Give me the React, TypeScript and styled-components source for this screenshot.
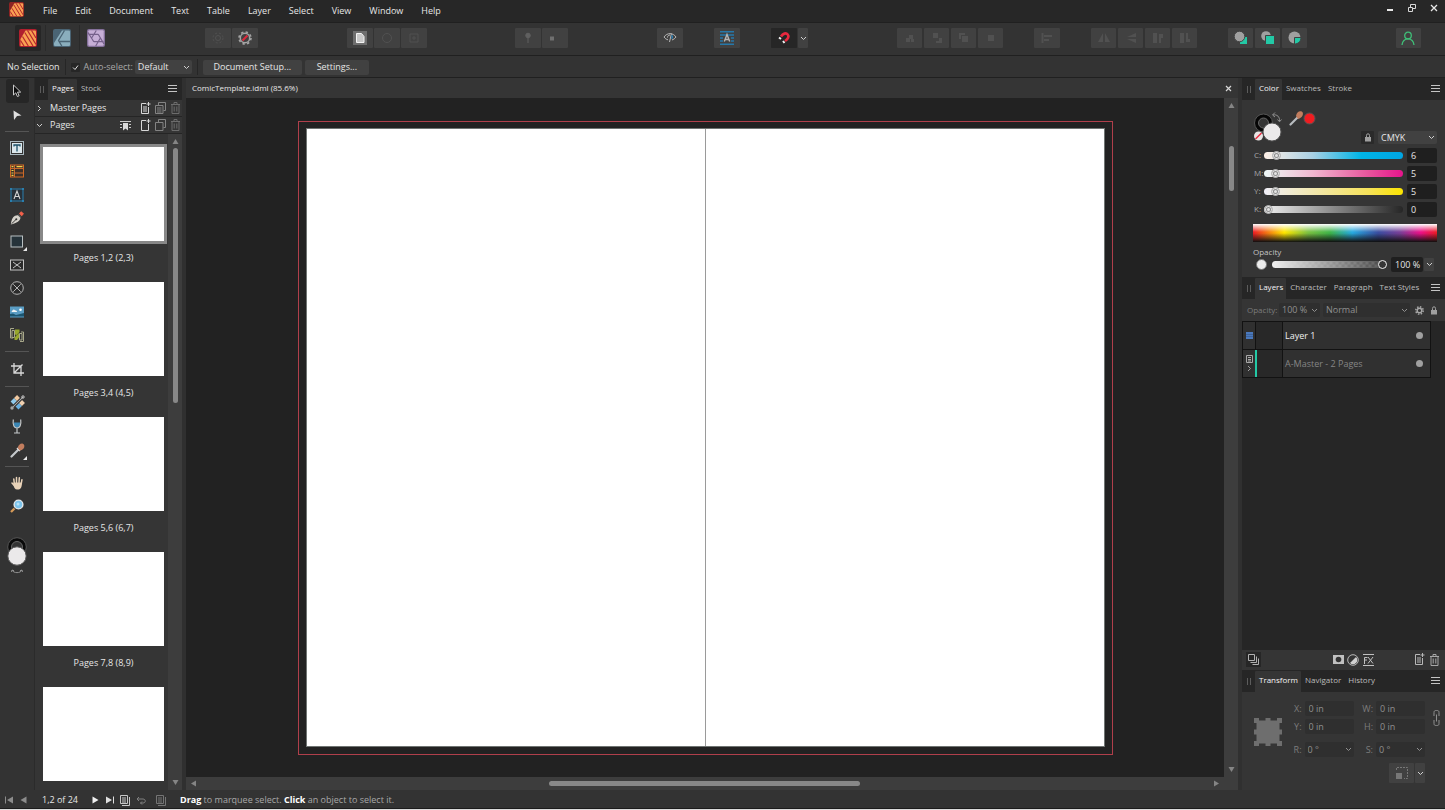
import React, { useState } from "react";
import styled, { createGlobalStyle, css } from "styled-components";

const c = {
  menu: "#272727",
  bar: "#333333",
  panel: "#353535",
  button: "#414141",
  dark: "#262626",
  field: "#1f1f1f",
  canvas: "#222222",
  track: "#3d3d3d",
  thumb: "#888888",
  line: "#202020",
  text: "#e6e6e6",
  dim: "#a8a8a8",
  faint: "#7c7c7c",
  teal: "#23c9a6",
};

const GlobalStyle = createGlobalStyle`
  *, *::before, *::after { box-sizing: border-box; }
  body { margin: 0; background: ${c.bar}; }
  body, button, input, select {
    font-family: "Open Sans", "Noto Sans", sans-serif;
    font-size: 9px;
    line-height: 12px;
    color: ${c.text};
  }
  button, input, select { margin: 0; padding: 0; border: 0; background: none; }
  button { white-space: nowrap; }
  svg { display: block; flex: none; }
`;

/* ---------- shell ---------- */

const Shell = styled.div`
  display: flex;
  flex-direction: column;
  height: 100vh;
  overflow: hidden;
  background: ${c.bar};
  border-bottom: 1px solid #dddddd;
`;

const MenuBar = styled.header`
  display: flex;
  align-items: center;
  height: 22px;
  padding-left: 9px;
  background: ${c.menu};
  & > svg { margin-bottom: 4px; }
`;

const MenuList = styled.nav`
  display: flex;
  flex: 1;
  margin-left: 10px;
  padding-bottom: 1px;
`;

const MenuItem = styled.button`
  padding: 0 9px;
`;

const WindowControls = styled.div`
  display: flex;
  gap: 6px;
  padding: 0 3px 6px 0;
`;

const WindowButton = styled.button`
  display: grid;
  place-items: center;
  width: 16px;
  height: 12px;
`;

const Toolbar = styled.div`
  display: flex;
  align-items: center;
  justify-content: space-between;
  height: 34px;
  padding: 0 24px 2px 15px;
  border-top: 1px solid ${c.line};
  border-bottom: 1px solid ${c.line};
`;

const Personas = styled.div`
  display: flex;
  align-items: center;
  margin-right: 7px;
`;

const Persona = styled.button<{ $active?: boolean }>`
  display: grid;
  place-items: center;
  width: 26px;
  height: 26px;
  border-radius: 2px;
  background: ${(p) => (p.$active ? c.dark : "none")};
`;

const PersonaRule = styled.span`
  width: 1px;
  height: 26px;
  margin: 0 3px 0 4px;
  background: #2a2a2a;
`;

const Cluster = styled.div`
  display: flex;
  gap: 31px;
`;

const Group = styled.div<{ $loose?: boolean }>`
  display: flex;
  gap: ${(p) => (p.$loose ? 2 : 1)}px;
`;

const ToolbarButton = styled.button<{ $active?: boolean; $size?: "arrow" | "small"; $muted?: boolean }>`
  display: grid;
  place-items: center;
  width: ${(p) => (p.$size === "arrow" ? 10 : p.$size === "small" ? 25 : 26)}px;
  height: 20px;
  border-radius: 1px;
  background: ${(p) => (p.$active ? c.dark : c.button)};
  color: ${(p) => (p.$muted ? "#515151" : "#c8c8c8")};
`;

const ContextBar = styled.div`
  display: flex;
  align-items: center;
  height: 22px;
  padding: 1px 0 0 7px;
  border-bottom: 1px solid ${c.line};
`;

const ContextRule = styled.span`
  width: 1px;
  height: 16px;
  margin: 0 5px;
  background: ${c.dark};
`;

const CheckLabel = styled.label`
  display: flex;
  align-items: center;
  gap: 4px;
  margin-right: 2px;
  color: ${c.dim};
`;

const CheckHolder = styled.span`
  display: grid;
  & > * { grid-area: 1 / 1; place-self: center; }
  & > svg { pointer-events: none; }
`;

const CheckInput = styled.input`
  appearance: none;
  width: 9px;
  height: 9px;
  border-radius: 1px;
  background: ${c.dark};
`;

const ContextButton = styled.button<{ $wide?: boolean }>`
  width: ${(p) => (p.$wide ? 99 : 64)}px;
  height: 15px;
  margin-right: 3px;
  border-radius: 2px;
  background: ${c.button};
`;

/* ---------- select and fields ---------- */

const SelectHolder = styled.span<{ $w?: number; $tone?: "plain" | "dark"; $h?: number }>`
  display: grid;
  align-items: center;
  ${(p) => (p.$w ? css`width: ${p.$w}px;` : css`flex: 1;`)}
  height: ${(p) => p.$h || 14}px;
  border-radius: 2px;
  background: ${(p) => (p.$tone === "dark" ? "#2f2f2f" : c.button)};
  & > * { grid-area: 1 / 1; }
  & > svg { justify-self: end; margin-right: 2px; pointer-events: none; }
`;

const SelectBox = styled.select<{ $dim?: boolean }>`
  appearance: none;
  width: 100%;
  height: 100%;
  padding: 0 3px;
  color: ${(p) => (p.$dim ? "#909090" : c.text)};
  option { background: ${c.panel}; }
`;

type DropProps = { label: string; value: string; width?: number; height?: number; dim?: boolean };

function Dropdown({ label, value, width, height, dim }: DropProps) {
  return (
    <SelectHolder $w={width} $h={height} $tone={dim ? "dark" : "plain"}>
      <SelectBox aria-label={label} defaultValue={value} $dim={dim}>
        <option>{value}</option>
      </SelectBox>
      <Chevron color={dim ? "#909090" : "#d0d0d0"} />
    </SelectHolder>
  );
}

/* ---------- workspace ---------- */

const Workspace = styled.main`
  display: grid;
  grid-template-columns: 35px 147px minmax(0, 1fr) 203px;
  flex: 1;
  min-height: 0;
`;

const ToolStrip = styled.nav`
  display: flex;
  flex-direction: column;
  align-items: center;
  padding-top: 1px;
  border-right: 1px solid #2b2b2b;
`;

const ToolGroup = styled.div<{ $h: number }>`
  display: flex;
  flex-direction: column;
  width: 23px;
  height: ${(p) => p.$h}px;
`;

const ToolButton = styled.button<{ $active?: boolean }>`
  display: grid;
  place-items: center;
  flex: 1;
  border-radius: 3px;
  background: ${(p) => (p.$active ? c.dark : "none")};
  & > * { grid-area: 1 / 1; }
`;

const FlyoutMark = styled.svg`
  place-self: end;
  margin: 0 2px 2px 0;
`;

const ToolRule = styled.span`
  width: 24px;
  height: 1px;
  margin: 4px 0;
  background: #555555;
`;

const FillStroke = styled.button`
  margin-top: 19px;
`;

/* ---------- panels ---------- */

const Tabs = styled.div`
  display: flex;
  align-items: stretch;
  height: 22px;
  padding: 1px 5px 0 0;
  background: ${c.dark};
`;

const Grip = styled.span`
  display: flex;
  align-items: center;
  gap: 2px;
  width: 13px;
  padding-left: 5px;
  &::before, &::after {
    content: "";
    width: 1px;
    height: 7px;
    background: #5c5c5c;
  }
`;

const Tab = styled.button<{ $active?: boolean }>`
  padding: 0 3px 3px 4px;
  font-size: 8px;
  border-radius: 1px 1px 0 0;
  background: ${(p) => (p.$active ? c.panel : "none")};
  color: ${(p) => (p.$active ? "#f4f4f4" : "#bcbcbc")};
`;

const TabMenu = styled.button`
  margin-left: auto;
  padding-bottom: 2px;
`;

function PanelTabs({ names }: { names: string[] }) {
  const [current, setCurrent] = useState(names[0]);
  return (
    <Tabs role="tablist">
      <Grip />
      {names.map((n) => (
        <Tab key={n} role="tab" aria-selected={n === current} $active={n === current} onClick={() => setCurrent(n)}>
          {n}
        </Tab>
      ))}
      <TabMenu aria-label="Panel menu">
        <svg width="9" height="9" viewBox="0 0 9 9" stroke="#c4c4c4">
          <path d="M0 1.5h9M0 4.5h9M0 7.5h9" />
        </svg>
      </TabMenu>
    </Tabs>
  );
}

const PagesPanel = styled.section`
  display: flex;
  flex-direction: column;
  min-height: 0;
  background: ${c.panel};
`;

const SectionRow = styled.div`
  display: flex;
  align-items: center;
  height: 17px;
  padding: 0 1px;
  border-bottom: 1px solid #252525;
  &:last-of-type { border-bottom-color: ${c.panel}; }
`;

const SectionTitle = styled.button`
  display: flex;
  align-items: center;
  gap: 7px;
  flex: 1;
  text-align: left;
`;

const IconRow = styled.div`
  display: flex;
  align-items: center;
  gap: 3px;
`;

const IconButton = styled.button<{ $gap?: boolean }>`
  display: grid;
  place-items: center;
  width: 12px;
  height: 14px;
  margin-right: ${(p) => (p.$gap ? 5 : 0)}px;
`;

const PagesScroller = styled.div`
  display: flex;
  flex: 1;
  min-height: 0;
`;

const PageList = styled.ol`
  flex: 1;
  margin: 0;
  padding: 10px 0 0;
  overflow: hidden;
  list-style: none;
`;

const PageEntry = styled.li`
  height: 135px;
`;

const PageButton = styled.button<{ $active?: boolean }>`
  display: block;
  width: 100%;
  padding: 0 1px 0 5px;
`;

const PageThumb = styled.span<{ $active?: boolean }>`
  display: block;
  height: 100px;
  border: 3px solid ${(p) => (p.$active ? "#888888" : "transparent")};
  background: #ffffff padding-box;
`;

const PageLabel = styled.span`
  display: block;
  margin-top: 8px;
`;

const VScroll = styled.div`
  display: flex;
  flex-direction: column;
  align-items: center;
  width: 14px;
  padding: 4px 0;
  background: ${c.track};
`;

const VTrack = styled.div<{ $before: number; $size: number; $after: number }>`
  display: grid;
  flex: 1;
  width: 5px;
  grid-template-rows: ${(p) => `${p.$before}fr ${p.$size}fr ${p.$after}fr`};
  &::before {
    content: "";
    grid-row: 2;
    border-radius: 3px;
    background: ${c.thumb};
  }
`;

const HScroll = styled.div`
  display: flex;
  align-items: center;
  height: 13px;
  padding: 0 4px;
  background: ${c.track};
`;

const HTrack = styled.div`
  display: grid;
  flex: 1;
  height: 5px;
  grid-template-columns: 350fr 309fr 351fr;
  &::before {
    content: "";
    grid-column: 2;
    border-radius: 3px;
    background: ${c.thumb};
  }
`;

const DocArea = styled.section`
  display: flex;
  flex-direction: column;
  min-width: 0;
  padding: 0 4px;
  background: #303030;
`;

const DocTab = styled.div`
  display: flex;
  align-items: center;
  justify-content: space-between;
  height: 20px;
  padding: 0 6px;
  font-size: 8px;
  background: ${c.panel};
`;

const DocBody = styled.div`
  display: grid;
  flex: 1;
  min-height: 0;
  grid-template-columns: minmax(0, 1fr) 14px;
  grid-template-rows: minmax(0, 1fr) 13px;
  background: ${c.track};
`;

const Canvas = styled.div`
  display: flex;
  padding: 23px 111px 22px 112px;
  background: ${c.canvas};
`;

const Bleed = styled.div`
  display: flex;
  flex: 1;
  padding: 6px 7px 7px;
  border: 1px solid #b03f4b;
`;

const Spread = styled.div`
  display: flex;
  flex: 1;
  border: 1px solid #6f7472;
  background: #ffffff;
  &::before {
    content: "";
    width: 50%;
    border-right: 1px solid #9a9a9a;
  }
`;

const RightDock = styled.aside`
  display: flex;
  flex-direction: column;
  min-height: 0;
  background: ${c.panel};
`;

/* ---------- colour panel ---------- */

const ColorBody = styled.div`
  height: 177px;
  padding: 9px 8px 0 11px;
`;

const ColorTop = styled.div`
  display: flex;
  justify-content: space-between;
  height: 37px;
`;

const ColorMode = styled.div`
  display: flex;
  align-items: flex-end;
  gap: 4px;
  padding-bottom: 2px;
`;

const LockButton = styled.button`
  display: grid;
  place-items: center;
  width: 13px;
  height: 13px;
  border-radius: 1px;
  background: #2a2a2a;
`;

const Channel = styled.div`
  display: flex;
  align-items: center;
  height: 18px;
`;

const ChannelLabel = styled.label`
  width: 11px;
  padding-left: 1px;
  font-size: 8px;
  color: ${c.dim};
`;

const Slider = styled.input<{ $fill: string }>`
  appearance: none;
  flex: 1;
  min-width: 0;
  height: 11px;
  &::-webkit-slider-runnable-track {
    height: 7px;
    border-radius: 4px;
    background: ${(p) => p.$fill};
  }
  &::-webkit-slider-thumb {
    appearance: none;
    width: 9px;
    height: 9px;
    margin-top: -1px;
    border: 1px solid #b0b0b0;
    border-radius: 50%;
    background: #e4e4e4;
    box-shadow: inset 0 0 0 1px #e4e4e4, inset 0 0 0 2px #8c8c8c;
  }
`;

const NumberField = styled.input<{ $w: number }>`
  width: ${(p) => p.$w}px;
  height: 15px;
  padding: 0 0 0 4px;
  margin-left: 4px;
  border-radius: 2px;
  background: ${c.field};
`;

const Spectrum = styled.button`
  display: block;
  width: 100%;
  height: 18px;
  margin-top: 6px;
  background:
    linear-gradient(to bottom, #ffffff 0%, rgba(255, 255, 255, 0) 45%, rgba(0, 0, 0, 0) 50%, #101010 100%),
    linear-gradient(to right, #ed1c24 0%, #ffe600 17%, #7cc242 30%, #3fb54a 42%, #27aae1 54%, #3a4ea1 68%, #7a3f98 80%, #ec1089 91%, #ed1c24 100%);
`;

const SmallLabel = styled.label`
  display: block;
  margin-top: 4px;
  font-size: 8px;
  color: #c4c4c4;
`;

const OpacityRow = styled.div`
  display: flex;
  align-items: center;
  height: 13px;
  padding-left: 3px;
`;

const FillDot = styled.span`
  width: 11px;
  height: 11px;
  margin-right: 5px;
  border: 1px solid #777777;
  border-radius: 50%;
  background: #ececec;
`;

const OpacitySlider = styled.input`
  appearance: none;
  flex: 1;
  min-width: 0;
  height: 11px;
  &::-webkit-slider-runnable-track {
    height: 7px;
    border-radius: 4px;
    background: linear-gradient(to right, #f0f0f0, rgba(64, 64, 64, 0.6)),
      repeating-conic-gradient(#7a7a7a 0 25%, #464646 0 50%) center / 6px 6px;
  }
  &::-webkit-slider-thumb {
    appearance: none;
    width: 9px;
    height: 9px;
    margin-top: -1px;
    border: 1px solid #f0f0f0;
    border-radius: 50%;
    background: #353535;
  }
`;

const DropButton = styled.button`
  display: grid;
  place-items: center;
  width: 10px;
  height: 13px;
  margin: 0 3px 0 1px;
  border-radius: 1px;
  background: ${c.button};
`;

/* ---------- layers panel ---------- */

const LayersBody = styled.div`
  display: flex;
  flex-direction: column;
  flex: 1;
  min-height: 0;
`;

const LayerOptions = styled.div`
  display: flex;
  align-items: center;
  gap: 3px;
  height: 22px;
  padding: 0 5px;
  color: ${c.faint};
  & > span:first-child { width: 29px; font-size: 8px; }
`;

const LayerList = styled.ul`
  flex: 1;
  margin: 0;
  padding: 0 14px 0 0;
  background: ${c.dark};
  list-style: none;
`;

const LayerRow = styled.li<{ $dim?: boolean }>`
  display: flex;
  align-items: stretch;
  height: 28px;
  border: 1px solid #121212;
  border-bottom-width: 0;
  background: #303030;
  color: ${(p) => (p.$dim ? "#858585" : "#f0f0f0")};
  &:last-child { height: 29px; border-bottom-width: 1px; }
`;

const LayerKind = styled.span`
  display: flex;
  flex-direction: column;
  align-items: center;
  justify-content: center;
  gap: 2px;
  width: 12px;
`;

const LayerThumb = styled.span<{ $accent?: boolean }>`
  width: 28px;
  border: solid #121212;
  border-width: 0 1px;
  border-left: ${(p) => (p.$accent ? `2px solid ${c.teal}` : "1px solid #121212")};
  background: #282828;
`;

const LayerName = styled.span`
  flex: 1;
  align-self: center;
  padding-left: 2px;
`;

const LayerDot = styled.button`
  align-self: center;
  width: 7px;
  height: 7px;
  margin-right: 7px;
  border-radius: 50%;
  background: #a0a0a0;
`;

const LayerFooter = styled.div`
  display: flex;
  align-items: center;
  gap: 3px;
  height: 20px;
  padding: 0 5px 1px 4px;
`;

const FooterSpace = styled.span<{ $grow: number }>`
  flex: ${(p) => p.$grow};
`;

const DarkIconButton = styled.button`
  display: grid;
  place-items: center;
  width: 15px;
  height: 15px;
  background: ${c.dark};
`;

/* ---------- transform panel ---------- */

const TransformBody = styled.div`
  display: grid;
  grid-template-columns: 28px 1fr 1fr 8px;
  column-gap: 8px;
  align-items: start;
  height: 98px;
  padding: 0 4px 0 12px;
`;

const AnchorPicker = styled.svg`
  margin-top: 26px;
`;

const LinkButton = styled.button`
  margin-top: 18px;
`;

const TransformColumn = styled.div`
  display: flex;
  flex-direction: column;
  gap: 3px;
  padding-top: 9px;
`;

const TransformRow = styled.div<{ $above?: number }>`
  display: flex;
  align-items: center;
  justify-content: flex-end;
  margin-top: ${(p) => p.$above || 0}px;
  color: ${c.faint};
`;

const TransformLabel = styled.label`
  flex: 1;
  padding-right: 3px;
  text-align: right;
`;

const TransformField = styled.input`
  width: 49px;
  height: 15px;
  padding: 0 4px;
  border-radius: 2px;
  background: #2f2f2f;
  color: #909090;
`;

/* ---------- status bar ---------- */

const StatusBar = styled.footer`
  display: flex;
  align-items: center;
  height: 19px;
  padding: 2px 0 0 4px;
  border-bottom: 1px solid #1c1c1c;
  color: ${c.dim};
  strong { color: #ffffff; }
`;

const StatusButton = styled.button<{ $w: number }>`
  display: grid;
  place-items: center;
  width: ${(p) => p.$w}px;
  height: 16px;
`;

const StatusHint = styled.span`
  margin-left: 8px;
`;

/* ---------- icons ---------- */

function Chevron({ color = "#d0d0d0", side }: { color?: string; side?: boolean }) {
  return (
    <svg width="7" height="7" viewBox="0 0 7 7" fill="none" stroke={color}>
      <path d={side ? "M2 1l2.5 2.5L2 6" : "M1 2l2.5 2.5L6 2"} />
    </svg>
  );
}

function Arrow({ d }: { d: string }) {
  return (
    <svg width="7" height="7" viewBox="0 0 7 7" fill="#858585">
      <path d={d} />
    </svg>
  );
}

function PublisherIcon({ size = 18, tile = true }: { size?: number; tile?: boolean }) {
  return (
    <svg width={size} height={size} viewBox="0 0 18 18">
      <rect width="18" height="18" rx="2" fill={tile ? "#b01f2e" : "#8e2424"} />
      <path d="M6.5 1.5H16a1 1 0 0 1 1 1V16a1 1 0 0 1-1 1H1.5v-7z" fill="#f9a052" />
      <path d="M8.5 1.500L17 15.500M12.500 1.500L17 9M5.800 3.500L14 17M3.500 7.500L9.300 17M1.500 11.500L5 17" stroke="#b4272d" strokeWidth="1.200" />
    </svg>
  );
}

function DesignerIcon() {
  return (
    <svg width="18" height="18" viewBox="0 0 18 18">
      <rect width="18" height="18" rx="2" fill="#4a6474" />
      <path d="M9 1.500h7a1 1 0 0 1 1 1V16a1 1 0 0 1-1 1H2a1 1 0 0 1-1-1v-2z" fill="#8aaebd" />
      <path d="M11.500 1.500L5.500 11.500l3.300 5.500M17 12.500H6" stroke="#4a6474" strokeWidth="1.300" fill="none" />
    </svg>
  );
}

function PhotoIcon() {
  return (
    <svg width="18" height="18" viewBox="0 0 18 18">
      <rect width="18" height="18" rx="2" fill="#84709a" />
      <rect x="1.3" y="1.3" width="15.4" height="15.4" rx="1" fill="#c6aed6" />
      <path d="M1.500 5.300h9.700M11.200 5.300L17 15M13.400 9L8.700 17M16.500 12.700H6.800M6.800 12.700L1 3.500M4.600 9L9.300 1.500" stroke="#75608a" strokeWidth="1.200" fill="none" />
    </svg>
  );
}

function AddPageIcon({ lined, color = "#d8d8d8" }: { lined?: boolean; color?: string }) {
  return (
    <svg width="11" height="13" viewBox="0 0 11 13" fill="none" stroke={color}>
      <path d="M6 1.5H1.5v10h7V5" />
      <path d="M8.5 0v4M6.5 2h4" />
      {lined && <path d="M3 5h4M3 7h4M3 9h4" />}
    </svg>
  );
}

function CopyIcon({ lined }: { lined?: boolean }) {
  return (
    <svg width="11" height="12" viewBox="0 0 11 12" fill="none" stroke="#848484">
      <path d="M3.5 3V.5h7v8h-2" />
      <path d="M.5 3.500h7.500v8H.5z" />
      {lined && <path d="M2 6h4.500M2 8h4.500M2 10h4.500" />}
    </svg>
  );
}

function TrashIcon({ color = "#6c6c6c" }: { color?: string }) {
  return (
    <svg width="11" height="12" viewBox="0 0 11 12" fill="none" stroke={color}>
      <path d="M1 2.5h9M4 2.5v-2h3v2M2 2.5v9h7v-9M4.2 4.5v5M6.8 4.5v5" />
    </svg>
  );
}

function LockGlyph({ color }: { color: string }) {
  return (
    <svg width="8" height="9" viewBox="0 0 8 9" fill="none" stroke={color}>
      <path d="M2.500 4V2.300a1.500 1.500 0 0 1 3 0V4" />
      <path d="M1 4h6v4.500H1z" fill={color} stroke="none" />
    </svg>
  );
}

function Dropper() {
  return (
    <svg width="15" height="15" viewBox="0 0 15 15">
      <path d="M1.500 13.500L8 7" stroke="#c4c9cc" strokeWidth="2.200" strokeLinecap="round" />
      <path d="M7 5l3 3" stroke="#dddddd" strokeWidth="1.500" />
      <path d="M7.800 5c.4-3.200 3-4.800 5-4.300 1.900.5 2 3.300.8 4.800-1 1.300-2.500 1.900-3.800 2z" fill="#c27d5e" />
    </svg>
  );
}

const tools: Record<string, React.ReactNode> = {
  Move: (
    <svg width="12" height="14" viewBox="0 0 12 14">
      <path d="M2.500 1v10l2.300-2.200 1.600 3.700 1.700-.7-1.600-3.700h3.200z" fill="#0c0c0c" stroke="#c8c8c8" />
    </svg>
  ),
  Node: (
    <svg width="10" height="10" viewBox="0 0 10 10"><path d="M1.500 .5l8 5-4.500.5-3 4z" fill="#e0e0e0" /></svg>
  ),
  "Frame Text": (
    <svg width="14" height="14" viewBox="0 0 14 14" fill="none">
      <rect x=".5" y=".5" width="13" height="13" stroke="#a9b7be" />
      <rect x="2" y="2" width="10" height="10" fill="#dbe7ec" />
      <path d="M4 5.500V4h6v1.500M7 4v6.500" stroke="#1d5068" strokeWidth="1.300" />
    </svg>
  ),
  Table: (
    <svg width="14" height="14" viewBox="0 0 14 14" fill="none">
      <rect x=".5" y="1" width="13" height="12" fill="#3c302a" stroke="#d06a24" />
      <path d="M4.500 1v12M0 4.500h14M5 9h9" stroke="#c9682a" />
      <path d="M6.500 2.700h6M1.500 2.700h2M1.500 6.500h2M1.500 9h2M1.500 11.300h2" stroke="#f2d14a" strokeWidth="1.200" />
    </svg>
  ),
  "Artistic Text": (
    <svg width="14" height="14" viewBox="0 0 14 14" fill="none">
      <rect x="1" y="1" width="12" height="12" fill="#273038" stroke="#2a7fae" />
      <path d="M4 11l3-8 3 8M5 8.500h4" stroke="#d4d4d4" strokeWidth="1.100" />
      <path d="M0 0h2v2H0zM12 0h2v2h-2zM0 12h2v2H0zM12 12h2v2h-2z" fill="#2a7fae" />
    </svg>
  ),
  Pen: (
    <svg width="14" height="14" viewBox="0 0 14 14">
      <path d="M.8 13.500C1.300 9.500 2.500 6 5 4.800L8.500 4l2 2.200c0 3.500-3.800 6-9.700 7.300z" fill="#d6d3cc" />
      <path d="M1.500 12.800L6 8.500" stroke="#3a3a3a" />
      <circle cx="6.300" cy="8.200" r="1" fill="#333333" />
      <path d="M8 3.500l3 3" stroke="#555555" strokeWidth="1.200" />
      <path d="M9 2.500l2.200-2.200 2.800 2.500-2.300 2.400z" fill="#f0604a" />
    </svg>
  ),
  Rectangle: (
    <svg width="14" height="13" viewBox="0 0 14 13"><rect x="1" y="1" width="11.500" height="11" fill="#26333a" stroke="#b8c0c2" /></svg>
  ),
  "Picture Frame Rectangle": (
    <svg width="14" height="12" viewBox="0 0 14 12" fill="none" stroke="#c4c4c4">
      <rect x=".5" y="1" width="13" height="10" fill="#2b2b2b" />
      <path d="M3 3l8 6M11 3L3 9" />
    </svg>
  ),
  "Picture Frame Ellipse": (
    <svg width="14" height="14" viewBox="0 0 14 14" fill="none" stroke="#b4b4b4">
      <circle cx="7" cy="7" r="6.300" fill="#2b2b2b" />
      <path d="M3.300 3.300l7.400 7.400M10.700 3.300l-7.400 7.400" />
    </svg>
  ),
  "Place Image": (
    <svg width="14" height="12" viewBox="0 0 14 12">
      <rect y=".5" width="14" height="11" fill="#5a9dc4" />
      <path d="M0 8l3-.5 3 1.500 8-2v3.500H0z" fill="#1b5570" />
      <path d="M1.500 6c1-2.500 2.500-3.500 3.500-1.700 1.200 0 2 .7 2 1.700z" fill="#f0f4f6" />
      <circle cx="10.500" cy="3.700" r="1.300" fill="#ffffff" />
    </svg>
  ),
  "Data Merge": (
    <svg width="14" height="14" viewBox="0 0 14 14" fill="none">
      <path d="M4 .5H.5V10H3M2 2.500h2.500v7H2zM13.500 4H11M10 13.500h3.500V4M9.500 5.500H12V12H9.500z" stroke="#a8a88a" />
      <path d="M5 1.500h4.500V4L6 7.500 5 6zM4.500 12V9.500L9 5v4.500L7 12z" fill="#98a72c" />
    </svg>
  ),
  "Vector Crop": (
    <svg width="13" height="13" viewBox="0 0 13 13" fill="none" stroke="#d8d8d8" strokeWidth="1.300">
      <path d="M3 0v10h10M0 3h10v10M11.500 1.500L3.500 9.500" />
    </svg>
  ),
  Fill: (
    <svg width="15" height="15" viewBox="0 0 15 15" fill="none">
      <path d="M2 8l3.500-3.500" stroke="#8fc8ea" strokeWidth="4" />
      <path d="M5.500 4.500L8.500 1.500" stroke="#f0c8a0" strokeWidth="4" />
      <path d="M7 13l3.500-3.500" stroke="#6ab0e0" strokeWidth="4" />
      <path d="M10.500 9.500l3-3" stroke="#f0d0b0" strokeWidth="4" />
      <path d="M2 13L13 2" stroke="#4a4a4a" strokeWidth="2.400" />
      <path d="M2 13L13 2" stroke="#a8a8a8" />
      <circle cx="2" cy="13" r="1.700" fill="#a4a4a4" />
      <circle cx="13" cy="2" r="1.200" stroke="#cccccc" />
    </svg>
  ),
  Transparency: (
    <svg width="10" height="15" viewBox="0 0 10 15" fill="none">
      <path d="M2 3.500h6v2.500c0 2-1.500 3-3 3s-3-1-3-3z" fill="#3a86b4" />
      <path d="M1.300.5c-.8 6 1 8.500 3.700 8.500S9.500 6.500 8.700.5M5 9v4.500M2 14h6" stroke="#c4c8ca" strokeWidth="1.200" />
    </svg>
  ),
  "Colour Picker": <Dropper />,
  View: (
    <svg width="13" height="14" viewBox="0 0 13 14" fill="none">
      <path d="M3.300 7.500L2.800 3M5.500 6.500V1.500M8 6.500L8.300 1.800M10.300 7.500l.6-3.700M3.200 9.500L1 7" stroke="#e8d2b8" strokeWidth="1.500" strokeLinecap="round" />
      <path d="M2.600 6.500h8.300c.3 3-.9 7-3.200 7H6c-2 0-3-2-3.400-4z" fill="#e8d2b8" />
    </svg>
  ),
  Zoom: (
    <svg width="14" height="14" viewBox="0 0 14 14" fill="none">
      <path d="M1 13l3.500-3.500" stroke="#d69a58" strokeWidth="2.300" />
      <circle cx="8.500" cy="5.500" r="4.400" fill="#7cc4ec" stroke="#e4e8ea" strokeWidth="1.400" />
      <circle cx="8" cy="5" r="1.500" fill="#b8e2f6" />
    </svg>
  ),
};

const toolGroups: { height: number; names: string[] }[] = [
  { height: 48, names: ["Move", "Node"] },
  {
    height: 211,
    names: ["Frame Text", "Table", "Artistic Text", "Pen", "Rectangle", "Picture Frame Rectangle", "Picture Frame Ellipse", "Place Image", "Data Merge"],
  },
  { height: 26, names: ["Vector Crop"] },
  { height: 71, names: ["Fill", "Transparency", "Colour Picker"] },
  { height: 47, names: ["View", "Zoom"] },
];

const flyouts = ["Rectangle", "Colour Picker"];

/* ---------- sections ---------- */

function Menu() {
  const items = ["File", "Edit", "Document", "Text", "Table", "Layer", "Select", "View", "Window", "Help"];
  return (
    <MenuBar>
      <PublisherIcon size={15} tile={false} />
      <MenuList>
        {items.map((i) => (
          <MenuItem key={i}>{i}</MenuItem>
        ))}
      </MenuList>
      <WindowControls>
        <WindowButton aria-label="Minimise">
          <svg width="8" height="8" viewBox="0 0 8 8"><path d="M1 5h6v2H1z" fill="#e8e8e8" /></svg>
        </WindowButton>
        <WindowButton aria-label="Restore">
          <svg width="8" height="8" viewBox="0 0 8 8" fill="none" stroke="#d8d8d8"><path d="M.5 3.500h4v4h-4zM2.500 3V.5h5v4H5" /></svg>
        </WindowButton>
        <WindowButton aria-label="Close">
          <svg width="8" height="8" viewBox="0 0 8 8" stroke="#e8e8e8" strokeWidth="1.300"><path d="M1 1l6 6M7 1L1 7" /></svg>
        </WindowButton>
      </WindowControls>
    </MenuBar>
  );
}

function Icon({ children }: { children: React.ReactNode }) {
  return (
    <svg width="14" height="14" viewBox="0 0 14 14" fill="none" stroke="currentColor">
      {children}
    </svg>
  );
}

const orderIcons = [
  { label: "Move to back", d: "M3 7h4v4H3zM6 4h4v4H6zM8 8h3v3H8z" },
  { label: "Back one", d: "M3 2h5v5H3zM9 7h3v5H6v-2h3z" },
  { label: "Forward one", d: "M2 2h6v2H4v4H2zM5 5h6v6H5z" },
  { label: "Move to front", d: "M4 4h6v6H4z" },
];

const flipIcons = [
  { label: "Flip horizontal", d: "M6 2v9H1zM8 2v9h5z" },
  { label: "Flip vertical", d: "M12 2v4L3 6zM12 12V8L3 8z" },
  { label: "Rotate left", d: "M2 2h4v10H2zM8 3h4v4h-2v5H8z" },
  { label: "Rotate right", d: "M2 2h4v10H2zM8 2h2v6h2v3H8z" },
];

function MutedGroup({ icons }: { icons: { label: string; d: string }[] }) {
  return (
    <Group $loose>
      {icons.map((i) => (
        <ToolbarButton key={i.label} aria-label={i.label} $muted $size="small">
          <Icon><path d={i.d} fill="currentColor" stroke="none" /></Icon>
        </ToolbarButton>
      ))}
    </Group>
  );
}

function TopToolbar() {
  return (
    <Toolbar>
      <Personas>
        <Persona aria-label="Publisher" $active><PublisherIcon /></Persona>
        <PersonaRule />
        <Persona aria-label="Designer"><DesignerIcon /></Persona>
        <PersonaRule />
        <Persona aria-label="Photo"><PhotoIcon /></Persona>
      </Personas>
      <Group>
        <ToolbarButton aria-label="Preflight" $muted>
          <Icon><circle cx="7" cy="7" r="2.500" /><circle cx="7" cy="7" r="5" strokeDasharray="2 2" /></Icon>
        </ToolbarButton>
        <ToolbarButton aria-label="Live preflight">
          <Icon>
            <circle cx="7" cy="7" r="4.700" stroke="#a4a4a4" strokeWidth="1.500" />
            <circle cx="7" cy="7" r="6" stroke="#a4a4a4" strokeWidth="1.600" strokeDasharray="2.400 2.300" />
            <path d="M4.500 9.500l5-5" stroke="#e0283c" strokeWidth="2" />
          </Icon>
        </ToolbarButton>
      </Group>
      <Group>
        <ToolbarButton aria-label="Page">
          <Icon>
            <path d="M0 0h14v14H0z" fill="#6e6e6e" stroke="none" />
            <path d="M3.500 2.500h5l2.500 3v6H3.500z" fill="#c8c8c8" stroke="#f4f4f4" />
          </Icon>
        </ToolbarButton>
        <ToolbarButton aria-label="Ellipse" $muted><Icon><circle cx="7" cy="7" r="4.500" /></Icon></ToolbarButton>
        <ToolbarButton aria-label="Origin" $muted><Icon><path d="M3 3h8v8H3zM6 6h2v2H6z" /></Icon></ToolbarButton>
      </Group>
      <Group>
        <ToolbarButton aria-label="Pin" $muted>
          <Icon><circle cx="7" cy="4.500" r="2.300" fill="#606060" stroke="#606060" /><path d="M7 6v6" stroke="#606060" /></Icon>
        </ToolbarButton>
        <ToolbarButton aria-label="Inline pin" $muted>
          <Icon><path d="M2 5.500h4v4H2z" fill="#707070" stroke="none" /></Icon>
        </ToolbarButton>
      </Group>
      <Cluster>
        <ToolbarButton aria-label="Preview">
          <Icon>
            <path d="M1 6c3-4.500 9-4.500 12 0-1 1.500-2.500 2.500-4 3M1 6c1 1.500 2.500 2.500 4 2.800" stroke="#b8b8b8" />
            <path d="M4.500 6.500c0-1.500 1-2.500 2.500-2.500M8.500 2.500L6.500 11" stroke="#b8b8b8" />
            <path d="M8.500 4c1.500 1 1.500 3 0 4" fill="#2b7fb4" stroke="#2b7fb4" />
          </Icon>
        </ToolbarButton>
        <ToolbarButton aria-label="Text wrap">
          <Icon>
            <path d="M0 .7h14M0 4h14M0 7h3M11 7h3M0 10h3M11 10h3M0 13.300h14" stroke="#2678aa" strokeWidth="1.600" />
            <path d="M4.300 10.500L7 3.500l2.700 7M5.200 8.500h3.600" stroke="#b4b4b4" strokeWidth="1.400" />
          </Icon>
        </ToolbarButton>
        <Group>
          <ToolbarButton aria-label="Snapping" $active>
            <Icon>
              <path d="M4 5.500C6 2.500 9 1.500 10.700 3.500s.3 4.500-2.700 6.500" stroke="#e8283e" strokeWidth="2.700" />
              <path d="M2 6.500l2 1.500M6 10l1.500 2" stroke="#f0f0f0" strokeWidth="2" />
            </Icon>
          </ToolbarButton>
          <ToolbarButton aria-label="Snapping options" $size="arrow"><Chevron /></ToolbarButton>
        </Group>
      </Cluster>
      <Cluster>
        <MutedGroup icons={orderIcons} />
        <ToolbarButton aria-label="Alignment" $muted>
          <Icon><path d="M2.500 2v10M4 5h8M4 9h5" strokeWidth="2" /></Icon>
        </ToolbarButton>
        <MutedGroup icons={flipIcons} />
        <Group $loose>
          <ToolbarButton aria-label="Add" $size="small">
            <Icon><path d="M6 6h7v7H6z" fill={c.teal} stroke="none" /><circle cx="5.500" cy="5.500" r="5.300" fill="#a0a0a0" stroke={c.button} /></Icon>
          </ToolbarButton>
          <ToolbarButton aria-label="Subtract" $size="small">
            <Icon><circle cx="5" cy="5" r="4.800" fill="#a0a0a0" stroke="none" /><path d="M4.500 4.500h9v9h-9z" fill={c.teal} stroke={c.button} /></Icon>
          </ToolbarButton>
          <ToolbarButton aria-label="Intersect" $size="small">
            <Icon><circle cx="6.500" cy="6.500" r="6" fill="#a0a0a0" stroke="none" /><path d="M6.500 6.500H13c0 4-3 6.500-6.500 6.500z" fill={c.teal} stroke={c.button} /></Icon>
          </ToolbarButton>
        </Group>
      </Cluster>
      <ToolbarButton aria-label="Account" $size="small">
        <Icon><circle cx="7" cy="4.500" r="3.300" stroke="#3fbf78" strokeWidth="1.300" /><path d="M1 14c.5-4 3-6.200 6-6.200s5.500 2.200 6 6.200" stroke="#3fbf78" strokeWidth="1.300" /></Icon>
      </ToolbarButton>
    </Toolbar>
  );
}

function ContextToolbar() {
  return (
    <ContextBar>
      <span>No Selection</span>
      <ContextRule />
      <CheckLabel>
        <CheckHolder>
          <CheckInput type="checkbox" defaultChecked />
          <svg width="7" height="7" viewBox="0 0 7 7" fill="none" stroke="#e0e0e0"><path d="M1 3.500L3 5.500 6 1.500" /></svg>
        </CheckHolder>
        Auto-select:
      </CheckLabel>
      <Dropdown label="Auto-select mode" value="Default" width={57} />
      <ContextRule />
      <ContextButton $wide>Document Setup...</ContextButton>
      <ContextButton>Settings...</ContextButton>
    </ContextBar>
  );
}

function Tools() {
  return (
    <ToolStrip aria-label="Tools">
      {toolGroups.map((g, gi) => (
        <React.Fragment key={gi}>
          {gi > 0 && <ToolRule />}
          <ToolGroup $h={g.height}>
            {g.names.map((n) => (
              <ToolButton key={n} aria-label={n} $active={n === "Move"}>
                {tools[n]}
                {flyouts.includes(n) && (
                  <FlyoutMark width="4" height="4" viewBox="0 0 4 4"><path d="M4 0v4H0z" fill="#e8e8e8" /></FlyoutMark>
                )}
              </ToolButton>
            ))}
          </ToolGroup>
        </React.Fragment>
      ))}
      <FillStroke aria-label="Fill and stroke">
        <svg width="20" height="38" viewBox="0 0 20 38" fill="none">
          <circle cx="10" cy="10" r="9.300" fill="#0a0a0a" stroke="#555555" />
          <circle cx="10" cy="10" r="5.500" fill="#333333" stroke="#666666" />
          <circle cx="10" cy="19" r="9.200" fill="#ebe9ea" stroke="#555555" />
          <path d="M5 33c1.500 3.500 8.500 3.500 10 0M4.500 35l.5-2 2 .7M15.500 35l-.5-2-2 .7" stroke="#909090" />
        </svg>
      </FillStroke>
    </ToolStrip>
  );
}

const spreads = [
  { name: "Pages 1,2 (2,3)", labelled: true },
  { name: "Pages 3,4 (4,5)", labelled: true },
  { name: "Pages 5,6 (6,7)", labelled: true },
  { name: "Pages 7,8 (8,9)", labelled: true },
  { name: "Pages 9,10 (10,11)", labelled: false },
];

function Pages() {
  return (
    <PagesPanel>
      <PanelTabs names={["Pages", "Stock"]} />
      <SectionRow>
        <SectionTitle><Chevron side />Master Pages</SectionTitle>
        <IconRow>
          <IconButton aria-label="Add master"><AddPageIcon lined /></IconButton>
          <IconButton aria-label="Duplicate master"><CopyIcon lined /></IconButton>
          <IconButton aria-label="Delete master"><TrashIcon /></IconButton>
        </IconRow>
      </SectionRow>
      <SectionRow>
        <SectionTitle><Chevron />Pages</SectionTitle>
        <IconRow>
          <IconButton aria-label="Apply master" $gap>
            <svg width="11" height="11" viewBox="0 0 11 11" fill="none" stroke="#c8c8c8">
              <path d="M0 1.500h11M0 4.500h2M9 4.500h2M0 7.500h2M9 7.500h2" />
              <path d="M3 3h5v7.500L5.500 8.500 3 10.500z" fill="#d8d8d8" stroke="none" />
            </svg>
          </IconButton>
          <IconButton aria-label="Add page"><AddPageIcon /></IconButton>
          <IconButton aria-label="Duplicate page"><CopyIcon /></IconButton>
          <IconButton aria-label="Delete page"><TrashIcon /></IconButton>
        </IconRow>
      </SectionRow>
      <PagesScroller>
        <PageList>
          {spreads.map((s, i) => (
            <PageEntry key={s.name}>
              <PageButton aria-label={s.name}>
                <PageThumb $active={i === 0} />
                {s.labelled && <PageLabel>{s.name}</PageLabel>}
              </PageButton>
            </PageEntry>
          ))}
        </PageList>
        <VScroll>
          <Arrow d="M3.500 1L6.500 6h-6z" />
          <VTrack $before={3} $size={254} $after={374} />
          <Arrow d="M3.500 6L6.500 1h-6z" />
        </VScroll>
      </PagesScroller>
    </PagesPanel>
  );
}

function DocumentView() {
  return (
    <DocArea>
      <DocTab>
        <span>ComicTemplate.idml (85.6%)</span>
        <button aria-label="Close document">
          <svg width="7" height="7" viewBox="0 0 7 7" stroke="#d8d8d8" strokeWidth="1.200"><path d="M1 1l5 5M6 1L1 6" /></svg>
        </button>
      </DocTab>
      <DocBody>
        <Canvas><Bleed><Spread /></Bleed></Canvas>
        <VScroll>
          <Arrow d="M3.500 1L6.500 6h-6z" />
          <VTrack $before={37} $size={45} $after={574} />
          <Arrow d="M3.500 6L6.500 1h-6z" />
        </VScroll>
        <HScroll>
          <Arrow d="M1 3.500L6 .5v6z" />
          <HTrack />
          <Arrow d="M6 3.500L1 .5v6z" />
        </HScroll>
      </DocBody>
    </DocArea>
  );
}

const channels = [
  { id: "C", value: 6, fill: "linear-gradient(to right, #fff0e6, #a8d0e4 35%, #00b4e6 70%, #00a5e3)" },
  { id: "M", value: 5, fill: "linear-gradient(to right, #eef8f6, #f0b8d0 35%, #e8559c 75%, #e6148c)" },
  { id: "Y", value: 5, fill: "linear-gradient(to right, #f0eef8, #f2e8b0 35%, #f6e25a 75%, #fbe400)" },
  { id: "K", value: 0, fill: "linear-gradient(to right, #f0f0f0, #8a8a8a 50%, #262626)" },
];

function ColorPanel() {
  return (
    <>
      <PanelTabs names={["Color", "Swatches", "Stroke"]} />
      <ColorBody>
        <ColorTop>
          <svg width="66" height="36" viewBox="0 0 66 36" fill="none">
            <circle cx="10.500" cy="14" r="9" fill="#060606" stroke="#555555" />
            <circle cx="10.500" cy="14" r="5" fill="#353535" stroke="#666666" />
            <circle cx="19" cy="23" r="9" fill="#ebe9ea" stroke="#555555" />
            <circle cx="5.500" cy="27" r="4.500" fill="#e8e4e4" />
            <path d="M2.500 30l6-6" stroke="#e8283e" strokeWidth="1.500" />
            <path d="M20 6c4-1 7 2 6.500 6M22 3.500l-2.500 2.500 2.500 2M24.500 10.500l2 2.300 2-2.300" stroke="#909090" />
            <path d="M37.500 15.500l7-7" stroke="#b8bcc0" strokeWidth="2.200" strokeLinecap="round" />
            <path d="M43 7c.5-4 3.500-5.500 5.700-4.500s1.200 4.500-.4 5.800-2.300 1.400-3.300 1.700z" fill="#c27d5e" />
            <circle cx="56.500" cy="9.500" r="5.500" fill="#f01c20" stroke="#555555" />
          </svg>
          <ColorMode>
            <LockButton aria-label="Lock colour">
              <LockGlyph color="#a0a0a0" />
            </LockButton>
            <Dropdown label="Colour model" value="CMYK" width={59} height={13} />
          </ColorMode>
        </ColorTop>
        {channels.map((ch) => (
          <Channel key={ch.id}>
            <ChannelLabel htmlFor={`ch-${ch.id}`}>{ch.id}:</ChannelLabel>
            <Slider id={`ch-${ch.id}`} type="range" min={0} max={100} defaultValue={ch.value} $fill={ch.fill} />
            <NumberField aria-label={`${ch.id} value`} defaultValue={ch.value} $w={30} />
          </Channel>
        ))}
        <Spectrum aria-label="Colour spectrum" />
        <SmallLabel htmlFor="fill-opacity">Opacity</SmallLabel>
        <OpacityRow>
          <FillDot />
          <OpacitySlider id="fill-opacity" type="range" defaultValue={100} />
          <NumberField aria-label="Opacity value" defaultValue="100 %" $w={32} />
          <DropButton aria-label="Opacity options"><Chevron /></DropButton>
        </OpacityRow>
      </ColorBody>
    </>
  );
}

function LayersPanel() {
  return (
    <>
      <PanelTabs names={["Layers", "Character", "Paragraph", "Text Styles"]} />
      <LayersBody>
        <LayerOptions>
          <span>Opacity:</span>
          <Dropdown label="Layer opacity" value="100 %" width={41} dim />
          <Dropdown label="Blend mode" value="Normal" dim />
          <IconButton aria-label="Blend options">
            <svg width="9" height="9" viewBox="0 0 9 9" fill="none" stroke="#a8a8a8">
              <circle cx="4.500" cy="4.500" r="2.300" strokeWidth="1.400" />
              <circle cx="4.500" cy="4.500" r="3.700" strokeWidth="1.500" strokeDasharray="1.500 1.400" />
            </svg>
          </IconButton>
          <IconButton aria-label="Lock layer"><LockGlyph color="#a0a0a0" /></IconButton>
        </LayerOptions>
        <LayerList>
          <LayerRow>
            <LayerKind>
              <svg width="7" height="7" viewBox="0 0 7 7"><path d="M0 0h7v7H0z" fill="#4a78bc" /><path d="M0 2.500h7M0 4.500h7" stroke="#3c639c" /></svg>
            </LayerKind>
            <LayerThumb />
            <LayerName>Layer 1</LayerName>
            <LayerDot aria-label="Toggle Layer 1" />
          </LayerRow>
          <LayerRow $dim>
            <LayerKind>
              <svg width="7" height="8" viewBox="0 0 7 8" fill="none" stroke="#a8a8a8"><path d="M.5.5h6v7h-6zM2 2.500h3M2 4.500h3M2 6h3" /></svg>
              <Chevron side color="#a0a0a0" />
            </LayerKind>
            <LayerThumb $accent />
            <LayerName>A-Master - 2 Pages</LayerName>
            <LayerDot aria-label="Toggle A-Master" />
          </LayerRow>
        </LayerList>
        <LayerFooter>
          <DarkIconButton aria-label="Edit all layers">
            <svg width="12" height="12" viewBox="0 0 12 12" fill="none" stroke="#b0b0b0"><path d="M.5.5h6v6h-6zM8.500 2.500v6h-6M10.500 4.500v6h-6" /></svg>
          </DarkIconButton>
          <FooterSpace $grow={2} />
          <IconButton aria-label="Mask">
            <svg width="11" height="9" viewBox="0 0 11 9"><path d="M0 0h11v9H0z" fill="#c0c0c0" /><circle cx="5.500" cy="4.500" r="2.800" fill="#333333" /></svg>
          </IconButton>
          <IconButton aria-label="Adjustment">
            <svg width="12" height="12" viewBox="0 0 12 12"><circle cx="6" cy="6" r="5.300" fill="none" stroke="#b8b8b8" /><path d="M9 3a4.200 4.200 0 0 1-6 6z" fill="#d0d0d0" /></svg>
          </IconButton>
          <IconButton aria-label="Effects">
            <svg width="11" height="12" viewBox="0 0 11 12" fill="none" stroke="#c0c0c0"><path d="M0 .5h11M0 11.500h11M1.500 10V3.500h3M1.500 6h2.500M5 3l5 6.500M10 3L5 9.500" /></svg>
          </IconButton>
          <FooterSpace $grow={1} />
          <IconButton aria-label="Add layer"><AddPageIcon lined color="#b8b8b8" /></IconButton>
          <IconButton aria-label="Delete layer"><TrashIcon color="#a8a8a8" /></IconButton>
        </LayerFooter>
      </LayersBody>
    </>
  );
}

function TransformCell({ id, value }: { id: string; value: string }) {
  return (
    <TransformRow>
      <TransformLabel htmlFor={`tf-${id}`}>{id}:</TransformLabel>
      <TransformField id={`tf-${id}`} defaultValue={value} />
    </TransformRow>
  );
}

function TransformPanel() {
  return (
    <>
      <PanelTabs names={["Transform", "Navigator", "History"]} />
      <TransformBody>
        <AnchorPicker width="28" height="28" viewBox="0 0 28 28" fill="#6e6e6e" aria-label="Anchor point">
          <path d="M2.500 2.500h23v23h-23zM0 0h5v5H0zM11.500 0h5v5h-5zM23 0h5v5h-5zM0 11.500h5v5H0zM23 11.500h5v5h-5zM0 23h5v5H0zM11.500 23h5v5h-5zM23 23h5v5h-5z" />
        </AnchorPicker>
        <TransformColumn>
          <TransformCell id="X" value="0 in" />
          <TransformCell id="Y" value="0 in" />
          <TransformRow $above={5}>
            <TransformLabel as="span">R:</TransformLabel>
            <Dropdown label="Rotation" value="0 °" width={49} height={15} dim />
          </TransformRow>
        </TransformColumn>
        <TransformColumn>
          <TransformCell id="W" value="0 in" />
          <TransformCell id="H" value="0 in" />
          <TransformRow $above={5}>
            <TransformLabel as="span">S:</TransformLabel>
            <Dropdown label="Shear" value="0 °" width={49} height={15} dim />
          </TransformRow>
          <TransformRow $above={3}>
            <Group>
              <ToolbarButton aria-label="Transform mode" $size="small">
                <Icon><path d="M1.500 4V1.500h11v11H9" stroke="#777777" strokeDasharray="2 1" /><path d="M1 7h6v6H1z" fill="#777777" stroke="none" /></Icon>
              </ToolbarButton>
              <ToolbarButton aria-label="Transform mode options" $size="arrow"><Chevron /></ToolbarButton>
            </Group>
          </TransformRow>
        </TransformColumn>
        <LinkButton aria-label="Link dimensions">
          <svg width="7" height="16" viewBox="0 0 7 16" fill="none" stroke="#909090">
            <path d="M1 6V2.500C1 1 1.500.5 3.500.5S6 1 6 2.500V6M1 10v3.500c0 1.500.5 2 2.500 2s2.500-.5 2.500-2V10M3.500 4.500v7" />
          </svg>
        </LinkButton>
      </TransformBody>
    </>
  );
}

function Status() {
  return (
    <StatusBar>
      <StatusButton $w={10} aria-label="First page">
        <svg width="8" height="8" viewBox="0 0 8 8" fill="#8c8c8c"><path d="M0 .5h1v7H0zM8 .5v7L2 4z" /></svg>
      </StatusButton>
      <StatusButton $w={18} aria-label="Previous page">
        <svg width="7" height="8" viewBox="0 0 7 8" fill="#8c8c8c"><path d="M6.500 .5v7L.5 4z" /></svg>
      </StatusButton>
      <StatusButton $w={56}>1,2 of 24</StatusButton>
      <StatusButton $w={15} aria-label="Next page">
        <svg width="7" height="8" viewBox="0 0 7 8" fill="#f0f0f0"><path d="M.5 .5v7L6.500 4z" /></svg>
      </StatusButton>
      <StatusButton $w={14} aria-label="Last page">
        <svg width="8" height="8" viewBox="0 0 8 8" fill="#e0e0e0"><path d="M7 .5h1v7H7zM0 .5v7L6 4z" /></svg>
      </StatusButton>
      <StatusButton $w={16} aria-label="Page view">
        <svg width="10" height="11" viewBox="0 0 10 11" fill="none" stroke="#c8c8c8"><path d="M.5.5h7v8h-7zM9.500 2v8.500H2M2 3h4M2 5h4M2 7h4" /></svg>
      </StatusButton>
      <StatusButton $w={16} aria-label="Return">
        <svg width="10" height="9" viewBox="0 0 10 9" fill="none" stroke="#808080"><path d="M1 3h6c3 0 3 4 0 4H4.500M3 1L1 3l2 2M6 5.500L4.500 7 6 8.500" /></svg>
      </StatusButton>
      <StatusButton $w={23} aria-label="Page list">
        <svg width="10" height="11" viewBox="0 0 10 11" fill="none" stroke="#757575"><path d="M.5.5h7v8h-7zM9.500 2v8.500H2M2 3h4M2 5h4M2 7h4" /></svg>
      </StatusButton>
      <StatusHint>
        <strong>Drag</strong> to marquee select. <strong>Click</strong> an object to select it.
      </StatusHint>
    </StatusBar>
  );
}

export default function App() {
  return (
    <Shell>
      <GlobalStyle />
      <Menu />
      <TopToolbar />
      <ContextToolbar />
      <Workspace>
        <Tools />
        <Pages />
        <DocumentView />
        <RightDock>
          <ColorPanel />
          <LayersPanel />
          <TransformPanel />
        </RightDock>
      </Workspace>
      <Status />
    </Shell>
  );
}
